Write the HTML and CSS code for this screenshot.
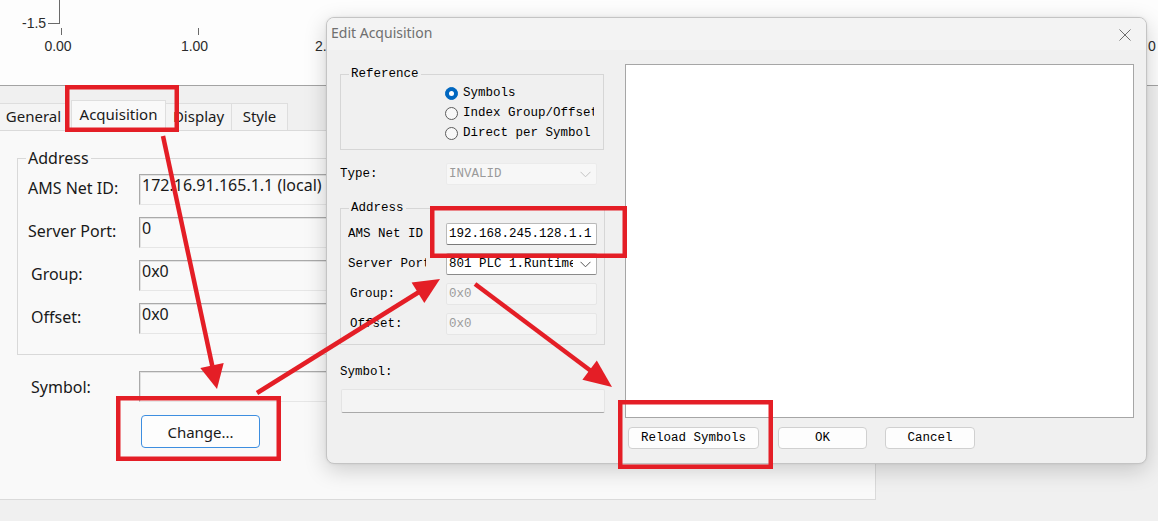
FILE: index.html
```html
<!DOCTYPE html>
<html>
<head>
<meta charset="utf-8">
<title>Edit Acquisition</title>
<link rel="stylesheet" href="styles.css">
</head>
<body>
<div class="screen">
  <div class="chart">
    <svg class="chart-svg" width="1158" height="85" viewBox="0 0 1158 85">
      <line x1="59.5" y1="0" x2="59.5" y2="24" stroke="#6a6a6a"/>
      <line x1="48" y1="23.5" x2="60" y2="23.5" stroke="#6a6a6a"/>
      <line x1="61.5" y1="28" x2="61.5" y2="35" stroke="#6a6a6a"/>
      <line x1="198.5" y1="28" x2="198.5" y2="35" stroke="#6a6a6a"/>
      <text x="22" y="28">-1.5</text>
      <text x="58" y="51" text-anchor="middle">0.00</text>
      <text x="194.5" y="51" text-anchor="middle">1.00</text>
      <text x="315" y="51">2.</text>
      <text x="1148" y="51">0</text>
    </svg>
  </div>
  <div class="tabstrip">
    <div class="tab t-general">General</div>
    <div class="tab t-acq active">Acquisition</div>
    <div class="tab t-display">Display</div>
    <div class="tab t-style">Style</div>
  </div>
  <div class="bottom">
    <div class="panel">
      <fieldset class="addr">
        <legend>Address</legend>
        <div class="form-grid">
          <label class="lbl">AMS Net ID:</label><div class="tbox">172.16.91.165.1.1 (local)</div>
          <label class="lbl">Server Port:</label><div class="tbox">0</div>
          <label class="lbl ind">Group:</label><div class="tbox">0x0</div>
          <label class="lbl ind">Offset:</label><div class="tbox">0x0</div>
        </div>
      </fieldset>
      <div class="form-grid sym-grid">
        <label class="lbl ind">Symbol:</label><div class="tbox"></div>
      </div>
      <button class="change-btn">Change...</button>
    </div>
  </div>
</div>

<div class="dialog">
  <div class="titlebar">
    <span class="title">Edit Acquisition</span>
    <svg class="close" width="12" height="12" viewBox="0 0 12 12"><path d="M0.5 0.5 L11.5 11.5 M11.5 0.5 L0.5 11.5" stroke="#6e6e6e" stroke-width="1" fill="none"/></svg>
  </div>
  <div class="dlg-body">
    <div class="dlg-left">
      <fieldset class="dgroup ref">
        <legend>Reference</legend>
        <div class="radios">
          <div class="radio-row"><span class="radio checked"></span><span class="rtext">Symbols</span></div>
          <div class="radio-row"><span class="radio"></span><span class="rtext">Index Group/Offset</span></div>
          <div class="radio-row"><span class="radio"></span><span class="rtext">Direct per Symbol</span></div>
        </div>
      </fieldset>
      <div class="drow type-row">
        <span class="dlbl type-lbl">Type:</span>
        <div class="combo disabled"><span class="ctext">INVALID</span><svg class="chev" width="11" height="7" viewBox="0 0 11 7"><polyline points="0.5,0.8 5.5,5.8 10.5,0.8" fill="none" stroke="#c2c2c2" stroke-width="1"/></svg></div>
      </div>
      <fieldset class="dgroup daddr">
        <legend>Address</legend>
        <div class="drows">
          <div class="drow"><span class="dlbl">AMS Net ID</span><div class="dinput">192.168.245.128.1.1</div></div>
          <div class="drow"><span class="dlbl">Server Port</span><div class="combo"><span class="ctext">801 PLC 1.Runtime</span><svg class="chev" width="11" height="7" viewBox="0 0 11 7"><polyline points="0.5,0.8 5.5,5.8 10.5,0.8" fill="none" stroke="#555" stroke-width="1"/></svg></div></div>
          <div class="drow"><span class="dlbl ind">Group:</span><div class="dinput disabled">0x0</div></div>
          <div class="drow"><span class="dlbl ind">Offset:</span><div class="dinput disabled">0x0</div></div>
        </div>
      </fieldset>
      <div class="sym-lbl">Symbol:</div>
      <div class="sym-box"></div>
    </div>
    <div class="dlg-right">
      <div class="listbox"></div>
      <div class="btn-row">
        <button class="dbtn reload">Reload Symbols</button>
        <button class="dbtn ok">OK</button>
        <button class="dbtn cancel">Cancel</button>
      </div>
    </div>
  </div>
</div>

<svg class="annot" width="1158" height="521" viewBox="0 0 1158 521">
  <g fill="none" stroke="#e41e26" stroke-width="4.5">
    <rect x="67.25" y="87.25" width="109.5" height="42.5"/>
    <rect x="118.25" y="398.25" width="160.5" height="60.5"/>
    <rect x="432.25" y="208.25" width="192.5" height="47.5"/>
    <rect x="620.25" y="402.25" width="150.5" height="64.5"/>
    <line x1="163" y1="136" x2="212.3" y2="366"/>
    <line x1="257" y1="393" x2="419" y2="292"/>
    <line x1="475" y1="284" x2="591" y2="371"/>
  </g>
  <g fill="#e41e26">
    <polygon points="217,389 200.3,368 223.7,363"/>
    <polygon points="440,279 424.3,302.9 411.6,282.6"/>
    <polygon points="612,387 582.4,379.8 596.8,360.6"/>
  </g>
</svg>
</body>
</html>
```

FILE: styles.css
```css
* { box-sizing: border-box; }

html, body {
  margin: 0;
  padding: 0;
}

body {
  width: 1158px;
  height: 521px;
  overflow: hidden;
  position: relative;
  background: #eeeeee;
  font-family: "Noto Sans", "Open Sans", sans-serif;
  color: #1a1a1a;
}

.screen {
  width: 1158px;
  height: 521px;
  display: flex;
  flex-direction: column;
}

/* chart */
.chart {
  height: 86px;
  background: #fdfdfd;
  border-bottom: 1px solid #a3a3a3;
  flex: none;
}
.chart-svg { display: block; }
.chart-svg text {
  font-family: "Liberation Sans", Arial, sans-serif;
  font-size: 14px;
  fill: #2b2b2b;
}

/* tabs */
.tabstrip {
  height: 44px;
  flex: none;
  display: flex;
  align-items: flex-end;
  font-size: 15px;
  background: #f0f0f0;
}
.tab {
  height: 27px;
  line-height: 25px;
  text-align: center;
  background: #f4f4f4;
  border: 1px solid #dedede;
  border-bottom: none;
  color: #1a1a1a;
}
.t-general { width: 68px; border-left: none; }
.t-acq { width: 95px; margin-left: 3px; height: 30px; line-height: 27px; background: #f9f9f9; }
.t-display { width: 66px; border-left: none; }
.t-style { width: 56px; border-left: none; }

.bottom {
  flex: 1;
  background: #f0f0f0;
}
.panel {
  width: 876px;
  height: 370px;
  background: #f9f9f9;
  border-top: 1px solid #dadada;
  border-right: 1px solid #dadada;
  border-bottom: 1px solid #dadada;
  padding-top: 19px;
}

/* main form */
.addr {
  margin: 0 0 0 17px;
  width: 740px;
  border: 1px solid #d9d9d9;
  padding: 8px 0 20px 8px;
}
.addr legend {
  font-size: 16px;
  line-height: 16px;
  padding: 0 2px;
}
.form-grid {
  display: grid;
  grid-template-columns: 113px 600px;
  grid-auto-rows: 31px;
  row-gap: 12px;
  align-items: center;
}
.lbl {
  font-size: 16px;
  padding-left: 2px;
  margin-top: -4px;
}
.lbl.ind { padding-left: 5px; }
.tbox {
  height: 31px;
  background: #f9f9f9;
  border-top: 1px solid #aaaaaa;
  border-left: 1px solid #aaaaaa;
  border-right: 1px solid #e6e6e6;
  border-bottom: 1px solid #e6e6e6;
  box-shadow: inset 1px 1px 0 #e2e2e2;
  font-size: 16px;
  line-height: 20px;
  padding: 0 0 0 2px;
  white-space: nowrap;
  overflow: hidden;
}
.sym-grid {
  margin: 16px 0 0 17px;
  grid-template-columns: 122px 600px;
}
.sym-grid .lbl { padding-left: 14px; margin-top: 0; }
.change-btn {
  display: block;
  margin: 13px 0 0 141px;
  width: 119px;
  height: 33px;
  background: #fdfdfd;
  border: 1px solid #3d8ee0;
  border-radius: 4px;
  font-family: "Noto Sans", "Open Sans", sans-serif;
  font-size: 15px;
  color: #1a1a1a;
  padding: 0;
}

/* dialog */
.dialog {
  position: absolute;
  left: 326px;
  top: 17px;
  width: 821px;
  height: 447px;
  background: #f0f0f0;
  border: 1px solid #c4c4c4;
  border-radius: 8px;
  box-shadow: 0 6px 22px rgba(0, 0, 0, 0.18), 0 0 3px rgba(0, 0, 0, 0.08);
  overflow: hidden;
}
.titlebar {
  height: 32px;
  display: flex;
  align-items: center;
  justify-content: space-between;
  padding: 0 15px 0 4px;
  background: #f3f3f3;
}
.title {
  font-size: 14px;
  color: #6f6f6f;
  margin-top: -3px;
}
.close { display: block; margin-top: 1px; }

.dlg-body {
  display: flex;
  gap: 20px;
  padding: 14px 12px 0 13px;
  font-family: "Liberation Mono", monospace;
  font-size: 12.5px;
  color: #000;
}
.dlg-left {
  width: 265px;
  flex: none;
}
.dlg-right {
  width: 509px;
  flex: none;
}

.dgroup {
  margin: 0;
  border: 1px solid #d6d6d6;
  padding: 0 0 0 7px;
}
.dgroup legend {
  line-height: 14px;
  padding: 0 2px;
  margin-left: 1px;
}
.ref {
  margin-top: 3px;
  width: 264px;
  padding-top: 2px;
  padding-bottom: 6px;
}
.radios {
  padding-left: 97px;
}
.radio-row {
  height: 20px;
  display: flex;
  align-items: center;
}
.radio {
  width: 13px;
  height: 13px;
  border-radius: 50%;
  border: 1px solid #5c5c5c;
  background: #f8f8f8;
  flex: none;
  margin-right: 5px;
  position: relative;
}
.radio.checked {
  border-color: #0067c0;
  background: #0067c0;
}
.radio.checked::after {
  content: "";
  position: absolute;
  left: 3px;
  top: 3px;
  width: 5px;
  height: 5px;
  border-radius: 50%;
  background: #fff;
}
.rtext {
  white-space: nowrap;
  overflow: hidden;
  width: 131px;
}

.drow {
  display: flex;
  align-items: center;
  height: 22px;
}
.type-row {
  margin-top: 13px;
}
.dlbl {
  width: 78px;
  margin-right: 20px;
  flex: none;
  white-space: nowrap;
  overflow: hidden;
}
.dlbl.ind { padding-left: 2px; }
.type-lbl { width: 86px; }

.combo {
  width: 151px;
  height: 22px;
  display: flex;
  align-items: center;
  justify-content: space-between;
  background: #fff;
  border: 1px solid #b4b4b4;
  border-bottom-color: #8a8a8a;
  border-radius: 2px;
  padding: 0 5px 0 2px;
}
.combo.disabled {
  background: #f7f7f7;
  border-color: #ebebeb;
  color: #9a9a9a;
}
.ctext {
  white-space: nowrap;
  overflow: hidden;
  width: 124px;
}
.chev { display: block; flex: none; }

.daddr {
  margin-top: 16px;
  width: 265px;
  padding-top: 8px;
  padding-bottom: 9px;
}
.drows {
  display: flex;
  flex-direction: column;
  gap: 8px;
}
.dinput {
  width: 151px;
  height: 22px;
  background: #fff;
  border: 1px solid #b9b9b9;
  border-bottom-color: #7a7a7a;
  border-radius: 2px;
  padding: 0 2px;
  line-height: 20px;
  white-space: nowrap;
  overflow: hidden;
}
.dinput.disabled {
  background: #f5f5f5;
  border-color: #e6e6e6;
  color: #9c9c9c;
}
.sym-lbl {
  margin-top: 19px;
  line-height: 16px;
}
.sym-box {
  margin: 9px 0 0 1px;
  width: 264px;
  height: 24px;
  background: #f4f4f4;
  border: 1px solid #e4e4e4;
  border-bottom-color: #a9a9a9;
  border-radius: 2px;
}

.listbox {
  height: 354px;
  background: #fff;
  border: 1px solid #a6a6a6;
}
.btn-row {
  display: flex;
  margin-top: 9px;
  padding-left: 3px;
}
.dbtn {
  height: 22px;
  background: #fdfdfd;
  border: 1px solid #d0d0d0;
  border-radius: 4px;
  font-family: "Liberation Mono", monospace;
  font-size: 12.5px;
  color: #000;
  padding: 0;
}
.reload { width: 131px; }
.ok { width: 89px; margin-left: 19px; }
.cancel { width: 90px; margin-left: 18px; }

/* annotations */
.annot {
  position: absolute;
  left: 0;
  top: 0;
  pointer-events: none;
}
```
